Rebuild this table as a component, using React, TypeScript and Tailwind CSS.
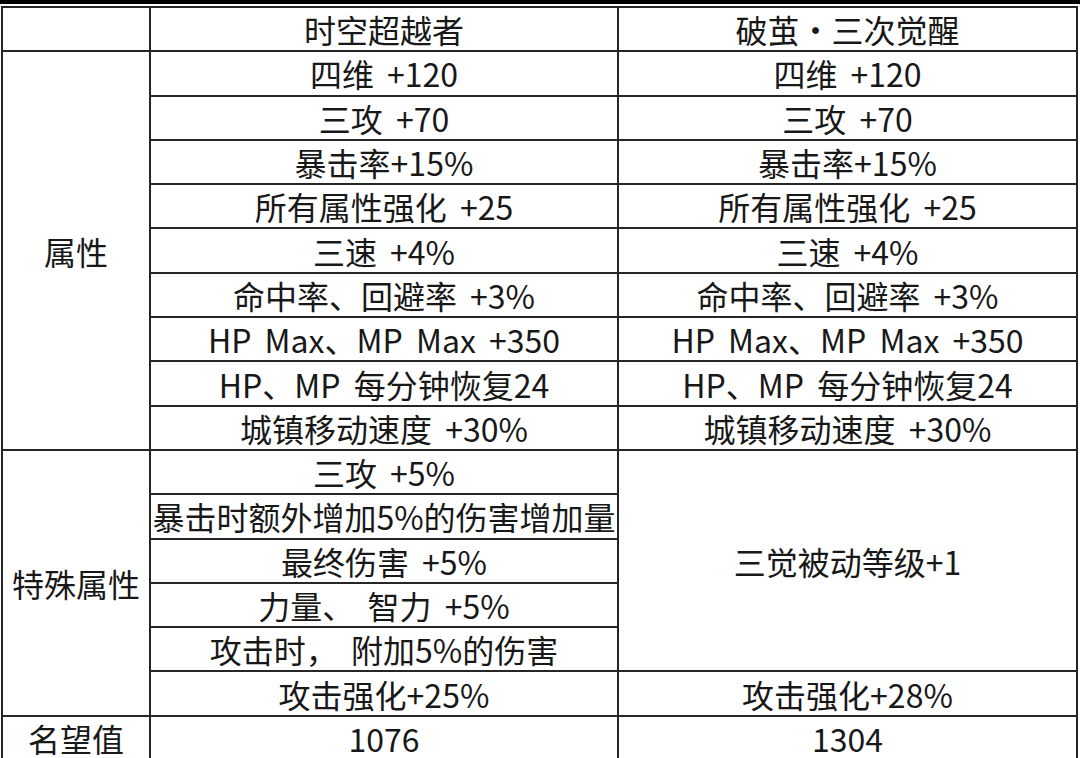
import React from 'react';

const attrs = [
    '四维 +120',
    '三攻 +70',
    '暴击率+15%',
    '所有属性强化 +25',
    '三速 +4%',
    '命中率、回避率 +3%',
    'HP Max、MP Max +350',
    'HP、MP 每分钟恢复24',
    '城镇移动速度 +30%',
];

const special = [
    '三攻 +5%',
    '暴击时额外增加5%的伤害增加量',
    '最终伤害 +5%',
    '力量、 智力 +5%',
    '攻击时， 附加5%的伤害',
];

const cell = 'border-2 border-[#262626] p-0 text-center align-middle whitespace-pre';

const App: React.FC = () => {
    return (
        <div className="w-[1080px] h-[758px] overflow-hidden bg-white text-[#181818] font-['Noto_Sans_CJK_SC',sans-serif] text-[32px] leading-none [word-spacing:6px]">
            <div className="h-[4px] bg-black" />
            <table className="mt-[2px] ml-[1px] w-[1075px] table-fixed border-collapse">
                <colgroup>
                    <col className="w-[148px]" />
                    <col className="w-[468px]" />
                    <col className="w-[459px]" />
                </colgroup>
                <tbody>
                    <tr className="h-[44.3px]">
                        <td className={cell}></td>
                        <td className={cell}>时空超越者</td>
                        <td className={cell}>破茧·三次觉醒</td>
                    </tr>
                    {attrs.map((a, i) => (
                        <tr key={a} className="h-[44.3px]">
                            {i === 0 && (
                                <td className={cell} rowSpan={attrs.length}>属性</td>
                            )}
                            <td className={cell}>{a}</td>
                            <td className={cell}>{a}</td>
                        </tr>
                    ))}
                    {special.map((s, i) => (
                        <tr key={s} className="h-[44.3px]">
                            {i === 0 && (
                                <td className={cell} rowSpan={special.length + 1}>特殊属性</td>
                            )}
                            <td className={cell}>{s}</td>
                            {i === 0 && (
                                <td className={cell} rowSpan={special.length}>三觉被动等级+1</td>
                            )}
                        </tr>
                    ))}
                    <tr className="h-[44.3px]">
                        <td className={cell}>攻击强化+25%</td>
                        <td className={cell}>攻击强化+28%</td>
                    </tr>
                    <tr className="h-[44.3px]">
                        <td className={cell}>名望值</td>
                        <td className={cell}>1076</td>
                        <td className={cell}>1304</td>
                    </tr>
                </tbody>
            </table>
        </div>
    );
};

export default App;
